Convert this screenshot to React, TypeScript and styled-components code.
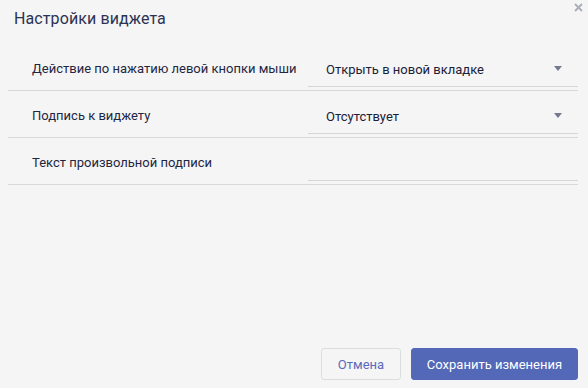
import React from "react";
import styled, { createGlobalStyle } from "styled-components";

const Global = createGlobalStyle`
  html, body { margin: 0; padding: 0; background: #f5f5f5; }
  body { font-family: Roboto, "Liberation Sans", sans-serif; }
  * { box-sizing: border-box; }
`;

const Dialog = styled.div`
  width: 588px;
  height: 388px;
  background: #f5f5f5;
  display: flex;
  flex-direction: column;
  position: relative;
`;

const Header = styled.div`
  height: 44px;
  padding: 9px 0 0 14px;
  font-size: 16px;
  color: #2b3253;
  letter-spacing: 0.1px;
`;

const Close = styled.button`
  position: absolute;
  top: 1px;
  right: 4px;
  width: 12px;
  height: 12px;
  padding: 0;
  border: none;
  background: transparent;
  display: flex;
  align-items: center;
  justify-content: center;
  cursor: pointer;
`;

const Rows = styled.div`
  display: flex;
  flex-direction: column;
  margin: 0 10px 0 8px;
`;

const Row = styled.div`
  display: grid;
  grid-template-columns: 300px 1fr;
  height: 47px;
  border-bottom: 1px solid #d9d9d9;
`;

const Label = styled.div`
  display: flex;
  align-items: center;
  padding: 3px 0 0 24px;
  font-size: 13px;
  color: #1f2642;
`;

const Field = styled.div`
  margin-top: 6px;
  height: 37px;
  border-bottom: 1px solid #d6d6d6;
  display: flex;
  align-items: center;
  justify-content: space-between;
  padding: 2px 16px 0 18px;
  font-size: 13px;
  color: #1a2038;
`;

const Arrow = styled.span`
  width: 0;
  height: 0;
  border-left: 4px solid transparent;
  border-right: 4px solid transparent;
  border-top: 5px solid #737a90;
  margin-top: -2px;
`;

const Spacer = styled.div`
  flex: 1;
`;

const Footer = styled.div`
  display: flex;
  justify-content: flex-end;
  gap: 10px;
  padding: 0 10px 8px 0;
`;

const Button = styled.button<{ $primary?: boolean }>`
  height: 32px;
  padding: 0;
  white-space: nowrap;
  border-radius: 3px;
  font-family: Roboto, "Liberation Sans", sans-serif;
  font-size: 13px;
  cursor: pointer;
  border: 1px solid ${(p) => (p.$primary ? "#5468b8" : "#dcdcdc")};
  background: ${(p) => (p.$primary ? "#5468b8" : "#f5f5f5")};
  color: ${(p) => (p.$primary ? "#ffffff" : "#5a6bbd")};
  width: ${(p) => (p.$primary ? "167px" : "80px")};
`;

const rows = [
  { label: "Действие по нажатию левой кнопки мыши", value: "Открыть в новой вкладке", select: true },
  { label: "Подпись к виджету", value: "Отсутствует", select: true },
  { label: "Текст произвольной подписи", value: "", select: false },
];

export default function App() {
  return (
    <>
      <Global />
      <Dialog>
        <Header>Настройки виджета</Header>
        <Close aria-label="close">
          <svg width="9" height="9" viewBox="0 0 9 9">
            <path d="M1 1L8 8M8 1L1 8" stroke="#a9adb8" strokeWidth="1.8" />
          </svg>
        </Close>
        <Rows>
          {rows.map((r) => (
            <Row key={r.label}>
              <Label>{r.label}</Label>
              <Field>
                <span>{r.value}</span>
                {r.select && <Arrow />}
              </Field>
            </Row>
          ))}
        </Rows>
        <Spacer />
        <Footer>
          <Button>Отмена</Button>
          <Button $primary>Сохранить изменения</Button>
        </Footer>
      </Dialog>
    </>
  );
}
